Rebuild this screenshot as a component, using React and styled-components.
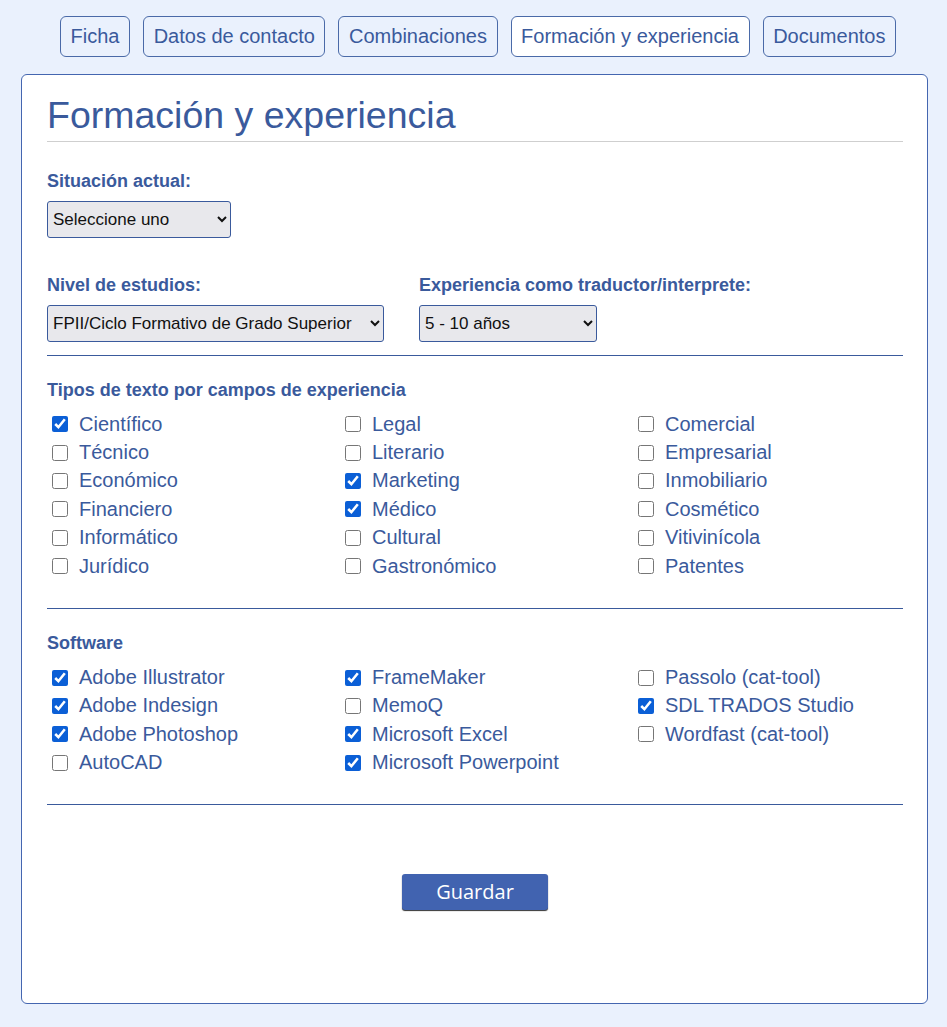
import React, {useState} from 'react'
import styled, {createGlobalStyle} from 'styled-components'

const GlobalStyle = createGlobalStyle`
    body {
        margin: 0;
        background: #eaf1fd;
        font-family: "Liberation Sans", Arial, sans-serif;
        color: #3a5a9c;
    }
`

const Page = styled.div`
    display: flex;
    flex-direction: column;
    padding: 16px 19px 23px 21px;
`

const Tabs = styled.nav`
    display: flex;
    justify-content: center;
    gap: 13px;
    margin: 0 -2px 0 5px;
`

const Tab = styled.button`
    height: 41px;
    padding: 0 9.6px;
    font-family: "Liberation Sans", Arial, sans-serif;
    font-size: 20px;
    color: #3a5a9c;
    background: ${p => p.active ? '#ffffff' : '#eaf1fd'};
    border: 1px solid #4a6aa8;
    border-radius: 6px;
    cursor: pointer;
`

const Card = styled.main`
    margin-top: 17px;
    background: #fff;
    border: 1px solid #4466b0;
    border-radius: 6px;
    padding: 17px 24px 0 25px;
    height: 930px;
    box-sizing: border-box;
`

const Title = styled.h1`
    margin: 0;
    font-size: 37.5px;
    font-weight: normal;
    line-height: 46px;
    padding-bottom: 3px;
    border-bottom: 1px solid #cfcfcf;
`

const Fields = styled.div`
    display: flex;
    gap: 35px;
    margin-top: ${p => p.top}px;
`

const Field = styled.div`
    display: flex;
    flex-direction: column;
    gap: 9px;
`

const Label = styled.label`
    font-size: 18px;
    font-weight: bold;
    line-height: 21px;
`

const Select = styled.select`
    width: ${p => p.w}px;
    height: 37px;
    padding: 0 1px;
    font-family: "Liberation Sans", Tahoma, sans-serif;
    font-size: 17px;
    color: #111;
    background: #e8e8ec;
    border: 1px solid #3a5a9c;
    border-radius: 3px;
`

const Divider = styled.hr`
    margin: ${p => p.top}px 0 0;
    border: none;
    border-top: 1px solid #3a5a9c;
`

const Heading = styled.h2`
    margin: ${p => p.top}px 0 0;
    font-size: 18px;
    font-weight: bold;
    line-height: 21px;
`

const Grid = styled.div`
    display: grid;
    grid-template-columns: repeat(3, 293px);
    grid-auto-flow: column;
    grid-template-rows: repeat(${p => p.rows}, 28.4px);
    margin-top: 9px;
`

const Option = styled.label`
    display: flex;
    align-items: center;
    gap: 11px;
    font-size: 20px;
    cursor: pointer;
`

const Box = styled.input`
    width: 16px;
    height: 16px;
    margin: 0 0 0 5px;
    accent-color: #0b5fd6;
`

const Actions = styled.div`
    display: flex;
    justify-content: center;
    margin-top: 69px;
`

const SaveButton = styled.button`
    width: 146px;
    height: 36px;
    font-family: "Open Sans", "Noto Sans", sans-serif;
    font-size: 20px;
    font-weight: 500;
    color: #fff;
    background: #4163b0;
    border: none;
    border-radius: 3px;
    box-shadow: 0 1px 1px #333;
    cursor: pointer;
`

const tabs = ['Ficha', 'Datos de contacto', 'Combinaciones', 'Formación y experiencia', 'Documentos']

const textTypes = [
    ['Científico', true], ['Técnico', false], ['Económico', false], ['Financiero', false], ['Informático', false], ['Jurídico', false],
    ['Legal', false], ['Literario', false], ['Marketing', true], ['Médico', true], ['Cultural', false], ['Gastronómico', false],
    ['Comercial', false], ['Empresarial', false], ['Inmobiliario', false], ['Cosmético', false], ['Vitivinícola', false], ['Patentes', false]
]

const software = [
    ['Adobe Illustrator', true], ['Adobe Indesign', true], ['Adobe Photoshop', true], ['AutoCAD', false],
    ['FrameMaker', true], ['MemoQ', false], ['Microsoft Excel', true], ['Microsoft Powerpoint', true],
    ['Passolo (cat-tool)', false], ['SDL TRADOS Studio', true], ['Wordfast (cat-tool)', false]
]

const CheckGrid = ({items, rows}) => (
    <Grid rows={rows}>
        {items.map(([name, checked]) =>
            <Option key={name}>
                <Box type="checkbox" defaultChecked={checked}/>
                {name}
            </Option>
        )}
    </Grid>
)

export default function App() {
    const [active, setActive] = useState(3)
    return (
        <Page>
            <GlobalStyle/>
            <Tabs>
                {tabs.map((t, i) => <Tab key={t} active={i === active} onClick={() => setActive(i)}>{t}</Tab>)}
            </Tabs>
            <Card>
                <Title>Formación y experiencia</Title>
                <Fields top={29}>
                    <Field>
                        <Label>Situación actual:</Label>
                        <Select w={184} defaultValue="">
                            <option value="">Seleccione uno</option>
                        </Select>
                    </Field>
                </Fields>
                <Fields top={37}>
                    <Field>
                        <Label>Nivel de estudios:</Label>
                        <Select w={337} defaultValue="fp">
                            <option value="fp">FPII/Ciclo Formativo de Grado Superior</option>
                        </Select>
                    </Field>
                    <Field>
                        <Label>Experiencia como traductor/interprete:</Label>
                        <Select w={178} defaultValue="5">
                            <option value="5">5 - 10 años</option>
                        </Select>
                    </Field>
                </Fields>
                <Divider top={13}/>
                <Heading top={24}>Tipos de texto por campos de experiencia</Heading>
                <CheckGrid items={textTypes} rows={6}/>
                <Divider top={28}/>
                <Heading top={24}>Software</Heading>
                <CheckGrid items={software} rows={4}/>
                <Divider top={27}/>
                <Actions>
                    <SaveButton>Guardar</SaveButton>
                </Actions>
            </Card>
        </Page>
    )
}
